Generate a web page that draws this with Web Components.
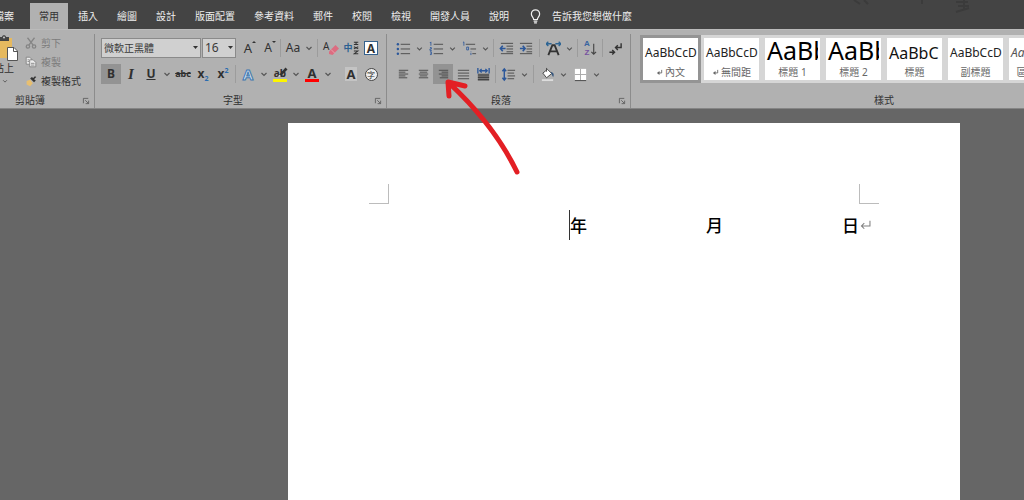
<!DOCTYPE html>
<html lang="zh-Hant">
<head>
<meta charset="utf-8">
<title>Word</title>
<style>
html, body { margin: 0; height: 100%; overflow: hidden; }
body { font: 10px/14px "Noto Sans", "Noto Sans CJK TC", sans-serif; background: #666; color: #303030; }
</style>
</head>
<body>
<word-app></word-app>
<script>
const define = (name, html, setup) => customElements.define(name, class extends HTMLElement {
  connectedCallback() {
    if (this.shadowRoot) return;
    const t = document.createElement('template');
    t.innerHTML = typeof html === 'function' ? html(this) : html;
    this.attachShadow({ mode: 'open' }).append(t.content.cloneNode(true));
    if (setup) setup(this);
  }
});

const lines = (rows, c = '#4a4a4a') => rows.map(([x1, x2, y]) => `<path d="M${x1} ${y}H${x2}" stroke="${c}" stroke-width="1"/>`).join('');
const BLUE = '#2b579a';
const icons = {
  chevron: '<path d="M5.500 7L8 9.500L10.500 7" stroke="#555" stroke-width="1.200"/>',
  launcher: '<path d="M4.500 11V4.500H11M7 7L11 11M11.500 7.500V11.500H7.500" stroke="#505050"/>',
  bulb: '<path d="M6 11.200C6 9 3.600 8.300 3.600 5.300A4.400 4.400 0 0 1 12.400 5.300C12.400 8.300 10 9 10 11.200ZM6 13H10M6.500 14.700H9.500" stroke="#f0f0f0" stroke-width="1.300"/>',
  cut: '<g stroke="#858585" stroke-width="1.500"><path d="M4 2L10.500 10.500M12 2L5.500 10.500"/><circle cx="4.500" cy="12" r="1.900"/><circle cx="11.500" cy="12" r="1.900"/></g>',
  copy: '<g fill="#eee" stroke="#808080"><path d="M2.500 2.500H6.500L8.500 4.500V10.500H2.500Z"/><path d="M6.500 5.500H10.500L13.500 8.500V13.500H6.500Z"/><path d="M8 9.500H12M8 11.500H12M4 5.500H6M4 7.500H6"/></g>',
  brush: '<path d="M3 8L7 6.500L10 10.500L7 14L3 12Z" fill="#e8bf70"/><path d="M7 5L11.500 9.500L13.500 7.500L11.500 6L14 3.500L12.500 2.500L10.500 4.500L9 3.500Z" fill="#333"/>',
  eraser: '<path d="M6 11.500L12.500 5L16 8.500L9.500 15L6 14Z" fill="#dc6c80"/><path d="M8 9.500L12 13.500" stroke="#e9a0ab"/>',
  brush2: '<path d="M7 11L13.500 3.500L15.500 5.500L9 12Z" fill="#333"/><path d="M7 11L6 13L9 12Z" fill="#eee"/>',
  bullets: `<g fill="${BLUE}"><circle cx="2" cy="3.500" r="1.300"/><circle cx="2" cy="8.500" r="1.300"/><circle cx="2" cy="13.500" r="1.300"/></g>` + lines([[5,15,3.5],[5,15,8.5],[5,15,13.5]]),
  numbers: `<path d="M1 2L2 1V5M1 7H2.500V8.500H1V10H3M1 11.500H2.500V14.500H1M1.500 13H2.500" stroke="${BLUE}" stroke-width=".9"/>` + lines([[5,15,3.5],[5,15,8.5],[5,15,13.5]]),
  multi: `<path d="M1 1.500L2 1V5M5 6.500H7V9.500H5V6.500M9.500 11V11.500M9.500 12.500V15" stroke="${BLUE}" stroke-width=".9"/>` + lines([[4,14,3.5],[9,15,8.5],[11,15,13.5]]),
  outdent: lines([[2,15,2.5],[8,15,5.5],[8,15,8.5],[8,15,11.5],[2,15,13.5]]) + `<path d="M7 8H1.500M4 5L1.500 8L4 11" stroke="${BLUE}" stroke-width="1.700"/>`,
  indent: lines([[1,14,2.5],[8,14,5.5],[8,14,8.5],[8,14,11.5],[1,14,13.5]]) + `<path d="M1 8H6.500M4 5L6.500 8L4 11" stroke="${BLUE}" stroke-width="1.700"/>`,
  scale: `<path d="M0 3H6M2.500 .8L0 3L2.500 5.200M10 3H16M13.500 .8L16 3L13.500 5.200" stroke="#2e6594" stroke-width="1.500"/><path d="M2.500 15L6.800 4.500H9.200L13.500 15M4.500 11H11.500" stroke="#333" stroke-width="2"/>`,
  down: '<path d="M12.500 3V14M10 11.500L12.500 14L15 11.500" stroke="#444" stroke-width="1.200"/>',
  marks: '<path d="M14 2.500V7H8M10.500 4.500L8 7L10.500 9.500M1.500 12H7M4.500 9.500L7 12L4.500 14.500" stroke="#333" stroke-width="1.500"/>',
  ruby: '<path d="M1 1.500H6M1 4H6M3.500 1.500V4M1 6.500L6 9M6 6.500L1 9M1 11.500H5.500L1.500 14.500H6" stroke="#333" stroke-width="1.200"/>',
  left: lines([[3,13,3.5],[3,10,5.5],[3,13,7.5],[3,10,9.5],[3,12,11.5]]),
  center: lines([[3,13,3.5],[4,12,5.5],[3,13,7.5],[4,12,9.5],[3,13,11.5]]),
  right: lines([[3,13,3.5],[6,13,5.5],[3,13,7.5],[6,13,9.5],[4,13,11.5]]),
  justify: lines([[2,14,3.5],[2,14,6.5],[2,14,9.5],[2,14,12.5]]),
  distribute: `<path d="M2 7H14V14.500H2Z" fill="#777"/><path d="M2 8.500H14M2 11H14M2 13.500H14" stroke="#444" stroke-width="1.200"/><path d="M2 1V7M14 1V7M4 4H12M6 2L4 4L6 6M10 2L12 4L10 6" stroke="${BLUE}" stroke-width="1.400"/>`,
  spacing: lines([[7,15,3.5],[7,14,6.5],[7,15,9.5],[7,14,12.5]]) + `<path d="M3.500 2V14M1.500 4.500L3.500 2L5.500 4.500M1.500 11.500L3.500 14L5.500 11.500" stroke="${BLUE}" stroke-width="1.500"/>`,
  bucket: '<path d="M3 6.500L8 2.500L12.500 7L7 11.500Z" fill="#fff" stroke="#444"/><path d="M7 5V1" stroke="#444"/><path d="M11.500 5C15 6 15 8 14 11L12 7Z" fill="#34557c"/><path d="M2 13H14V15H2Z" fill="#ddd"/>',
  borders: '<path d="M2 2H14V14H2Z" fill="#fff"/><path d="M8 2V14M2 8H14" stroke="#a8a8a8"/><path d="M2 14.500H14" stroke="#444"/>',
  enter: '<path d="M13.500 2V8.500H3M6.500 5L3 8.500L6.500 12" stroke="#808080" stroke-width="1.300"/>',
  mark: '<path d="M13 2V9H5" stroke="#666" stroke-width="2"/><path d="M8 4.500V13.500L2 9Z" fill="#666"/>'
};

define('word-icon', el => `<style>
:host { display: inline-flex; width: var(--icon, 16px); height: var(--icon, 16px); flex: none; }
svg { width: 100%; height: 100%; }
</style><svg viewBox="0 0 16 16" fill="none" aria-hidden="true">${icons[el.getAttribute('name')]}</svg>`);

define('ribbon-tab', el => `<style>
:host { display: block; flex: none; }
button { display: block; height: 26px; padding: 0 9px; border: 0; background: none; color: #eee; font: inherit; white-space: nowrap; }
:host([selected]) button { background: #b1b1b1; color: #333; }
:host([wide]) button { padding-right: 15px; }
</style><button type="button" role="tab" aria-selected="${el.hasAttribute('selected')}"><slot></slot></button>`);

define('tell-me', `<style>
:host { display: block; margin-left: 9px; --icon: 15px; }
button { display: flex; align-items: center; gap: 9px; height: 26px; padding: 0; border: 0; background: none; color: #eee; font: inherit; }
</style><button type="button"><word-icon name="bulb"></word-icon><span>告訴我您想做什麼</span></button>`);

define('ribbon-tabs', `<style>
:host { display: block; background: #444; position: relative; overflow: hidden; }
nav { display: flex; gap: 1px; padding-top: 3px; margin-left: -15px; }
svg { position: absolute; right: 30px; top: 0; }
</style>
<svg width="150" height="14" fill="none" stroke="#3b3b3b" stroke-width="2" aria-hidden="true"><path d="M10 0L16 4M20 0L24 4M78 0V4M112 2H124M114 6H125M120 0V11M112 12L125 8"/></svg>
<nav role="tablist">
<ribbon-tab wide>檔案</ribbon-tab><ribbon-tab selected>常用</ribbon-tab><ribbon-tab>插入</ribbon-tab><ribbon-tab>繪圖</ribbon-tab><ribbon-tab>設計</ribbon-tab><ribbon-tab>版面配置</ribbon-tab><ribbon-tab>參考資料</ribbon-tab><ribbon-tab>郵件</ribbon-tab><ribbon-tab>校閱</ribbon-tab><ribbon-tab>檢視</ribbon-tab><ribbon-tab>開發人員</ribbon-tab><ribbon-tab>說明</ribbon-tab><tell-me></tell-me>
</nav>`);

define('ribbon-group', el => `<style>
:host { display: flex; flex-direction: column; flex: none; box-sizing: border-box; border-right: 1px solid #8c8c8c; height: 74px; }
.body { flex: 1; }
footer { position: relative; text-align: center; height: 16px; line-height: 16px; }
:host([launcher]) footer { padding-right: 15px; }
button { position: absolute; right: 2px; top: 3px; padding: 0; border: 0; background: none; display: flex; --icon: 12px; }
</style><div class="body"><slot></slot></div>
<footer>${el.getAttribute('label')}${el.hasAttribute('launcher') ? `<button type="button" aria-label="${el.getAttribute('label')}設定"><word-icon name="launcher"></word-icon></button>` : ''}</footer>`);

define('tool-button', el => `<style>
:host { display: flex; flex: none; }
button { display: flex; align-items: center; justify-content: center; padding: 0; border: 0; background: none; height: 20px; color: #303030; font: inherit; position: relative; }
.main { width: 20px; }
.more { width: 12px; }
:host([pressed]) .main { background: #939393; }
</style><button class="main" type="button" aria-label="${el.getAttribute('label')}" aria-pressed="${el.hasAttribute('pressed')}"><slot></slot></button>${el.hasAttribute('menu') ? `<button class="more" type="button" aria-label="${el.getAttribute('label')}選項"><word-icon name="chevron"></word-icon></button>` : ''}`);

define('tool-separator', `<style>:host { display: block; flex: none; width: 1px; height: 18px; margin: 0 2px; background: #9c9c9c; } :host([wide]) { margin: 0 3px; }</style>`);

define('combo-box', el => `<style>
:host { display: block; position: relative; height: 20px; --icon: 12px; }
select { appearance: none; display: block; box-sizing: border-box; width: 100%; height: 20px; padding: 0 2px; border: 1px solid #8a8a8a; border-radius: 0; background: #d0d0d0; color: #3a3a3a; font: inherit; }
:host([large]) select { font-size: 12px; }
svg { position: absolute; right: 3px; top: 8px; pointer-events: none; }
</style><select aria-label="${el.getAttribute('label')}"><option>${el.getAttribute('value')}</option></select><svg width="5" height="4" aria-hidden="true"><path d="M0 0H5L2.500 3Z" fill="#333"/></svg>`);

define('clipboard-tools', `<style>
:host { display: flex; width: 94px; padding-left: 19px; height: 56px; }
button { padding: 0; border: 0; background: none; font: inherit; color: #303030; display: flex; align-items: center; white-space: nowrap; }
.paste { flex-direction: column; align-items: flex-start; width: 23px; padding-top: 1px; }
.paste span { margin-left: -6px; }
.paste word-icon { margin: 0 0 0 -1px; --icon: 12px; }
.list { display: flex; flex-direction: column; margin-left: 1px; }
.list button { gap: 3px; height: 19px; }
.list button:disabled { color: #7c7c7c; }
.list word-icon { --icon: 14px; }
</style>
<button class="paste" type="button"><svg width="19" height="26" viewBox="0 0 19 26" fill="none" aria-hidden="true"><path d="M0 3H12V23H0Z" fill="#e6b95f"/><path d="M0 2H2C2 -.5 6 -.5 6 2H9V6H0Z" fill="#444"/><circle cx="4" cy="2.500" r="1" fill="#ccc"/><path d="M7.500 12.500H14L17.500 16V25.500H7.500Z" fill="#fff" stroke="#555"/><path d="M13.500 12.500V16.500H17.500" stroke="#555"/></svg><span>貼上</span><word-icon name="chevron"></word-icon></button>
<div class="list">
<button type="button" disabled><word-icon name="cut"></word-icon>剪下</button>
<button type="button" disabled><word-icon name="copy"></word-icon>複製</button>
<button type="button"><word-icon name="brush"></word-icon>複製格式</button>
</div>`);

define('font-tools', `<style>
:host { display: block; padding: 4px 0 0 6px; width: 285px; }
.row { display: flex; align-items: center; height: 20px; }
.row + .row { margin-top: 6px; }
.family { width: 100px; margin-right: 1px; }
.size { width: 34px; margin-right: 2px; }
b, i, u, s, span { font-family: "Noto Sans", sans-serif; line-height: 16px; }
.big { font-size: 13px; }
.mid { font-size: 12px; }
.tiny { font-size: 9px; }
i { font-family: "Liberation Serif", serif; font-size: 15px; font-weight: bold; }
sub, sup { font-size: 7px; line-height: 0; color: #2b6cb0; }
.over { position: absolute; inset: 0 auto auto 2px; }
.bar { border-bottom: 3px solid red; line-height: 12px; width: 14px; text-align: center; }
.yellow { border-color: #fdf500; }
.outline { color: #d0dfee; -webkit-text-stroke: 1px #3f78b0; font-size: 15px; }
.box { box-sizing: border-box; width: 14px; height: 14px; line-height: 13px; background: #fff; border: 1px solid #34618d; text-align: center; font-size: 12px; }
.shade { background: #c4c4c4; width: 12px; line-height: 14px; text-align: center; }
.last { margin-left: auto; }
.actions { display: flex; margin-left: auto; margin-right: 5px; }
.ring { box-sizing: border-box; width: 13px; height: 13px; border: 1px solid #444; border-radius: 50%; background: #eee; font: 8px/11px "Noto Sans CJK TC", sans-serif; text-align: center; }
.zh { color: #2c5f91; font-family: "Noto Sans CJK TC", sans-serif; font-size: 9px; font-weight: bold; }
.mark { position: absolute; right: 1px; top: 0; }
.ruby { --icon: 14px; margin-right: -8px; }
</style>
<div class="row">
<combo-box class="family" label="字型" value="微軟正黑體"></combo-box>
<combo-box class="size" large label="字型大小" value="16"></combo-box>
<tool-button label="放大字型"><span class="big">A</span><svg class="mark" width="6" height="8" aria-hidden="true"><path d="M1 5L3 3L5 5Z" fill="#333"/></svg></tool-button>
<tool-button label="縮小字型"><span class="mid">A</span><svg class="mark" width="6" height="8" aria-hidden="true"><path d="M1 3L3 5L5 3Z" fill="#333"/></svg></tool-button>
<tool-separator></tool-separator>
<tool-button label="大小寫轉換" menu><span class="mid">Aa</span></tool-button>
<tool-separator></tool-separator>
<div class="actions">
<tool-button label="清除格式"><word-icon name="eraser"></word-icon><span class="over">A</span></tool-button>
<tool-button label="注音標示"><span class="zh">中</span><word-icon class="ruby" name="ruby"></word-icon></tool-button>
<tool-button label="字元框線"><b class="box">A</b></tool-button>
</div>
</div>
<div class="row">
<tool-button label="粗體" pressed><b class="mid">B</b></tool-button>
<tool-button label="斜體"><i>I</i></tool-button>
<tool-button label="底線" menu><u class="mid"><b>U</b></u></tool-button>
<tool-button label="刪除線"><s class="tiny"><b>abc</b></s></tool-button>
<tool-button label="下標"><b class="mid">x<sub>2</sub></b></tool-button>
<tool-button label="上標"><b class="mid">x<sup>2</sup></b></tool-button>
<tool-separator></tool-separator>
<tool-button label="文字效果" menu><b class="outline">A</b></tool-button>
<tool-button label="醒目提示" menu><b class="bar yellow">ab</b><word-icon name="brush2" class="over"></word-icon></tool-button>
<tool-button label="字型色彩" menu><b class="bar big">A</b></tool-button>
<div class="actions">
<tool-button label="字元網底"><b class="shade big">A</b></tool-button>
<tool-button label="圍繞字元"><span class="ring">字</span></tool-button>
</div>
</div>`);

define('paragraph-tools', `<style>
:host { display: block; padding: 4px 0 0 6px; width: 237px; --icon: 15px; }
.row { display: flex; align-items: center; height: 20px; }
.row + .row { margin-top: 6px; }
.az { display: flex; flex-direction: column; margin-right: 6px; font: bold 8px/9px "Liberation Sans", sans-serif; color: #3864a0; }
.az b + b { color: #7651a0; }
.over { position: absolute; left: 2px; }
tool-button[menu] + tool-button[menu] { margin-left: 1px; }
</style>
<div class="row">
<tool-button label="項目符號" menu><word-icon name="bullets"></word-icon></tool-button>
<tool-button label="編號" menu><word-icon name="numbers"></word-icon></tool-button>
<tool-button label="多層次清單" menu><word-icon name="multi"></word-icon></tool-button>
<tool-separator></tool-separator>
<tool-button label="減少縮排"><word-icon name="outdent"></word-icon></tool-button>
<tool-button label="增加縮排"><word-icon name="indent"></word-icon></tool-button>
<tool-separator wide></tool-separator>
<tool-button label="亞洲方式配置" menu><word-icon name="scale"></word-icon></tool-button>
<tool-separator></tool-separator>
<tool-button label="排序"><span class="az"><b>A</b><b>Z</b></span><word-icon name="down" class="over"></word-icon></tool-button>
<tool-separator></tool-separator>
<tool-button label="顯示標記"><word-icon name="marks"></word-icon></tool-button>
</div>
<div class="row">
<tool-button label="靠左對齊"><word-icon name="left"></word-icon></tool-button>
<tool-button label="置中"><word-icon name="center"></word-icon></tool-button>
<tool-button label="靠右對齊" pressed><word-icon name="right"></word-icon></tool-button>
<tool-button label="左右對齊"><word-icon name="justify"></word-icon></tool-button>
<tool-button label="分散對齊"><word-icon name="distribute"></word-icon></tool-button>
<tool-separator></tool-separator>
<tool-button label="行距" menu><word-icon name="spacing"></word-icon></tool-button>
<tool-separator wide></tool-separator>
<tool-button label="網底" menu><word-icon name="bucket"></word-icon></tool-button>
<tool-button label="框線" menu><word-icon name="borders"></word-icon></tool-button>
</div>`);

define('style-tile', el => `<style>
:host { display: block; flex: none; width: 61px; }
button { display: flex; flex-direction: column; box-sizing: border-box; width: 61px; height: 48px; padding: 0; border: 3px solid #d6d6d6; background: #fff; font: inherit; color: #666; overflow: hidden; }
:host([selected]) button { border-color: #949494; }
.sample { width: 100%; box-sizing: border-box; padding-left: 2px; height: 27px; line-height: 30px; font-size: 12px; color: #222; text-align: left; white-space: nowrap; overflow: hidden; }
:host([size="large"]) .sample { width: 53px; font-size: 25px; line-height: 24px; color: #000; }
:host([size="medium"]) .sample { font-size: 16px; line-height: 30px; color: #111; }
:host([italic]) .sample { font-style: italic; color: #555; }
.name { width: 100%; height: 14px; display: flex; justify-content: center; align-items: center; gap: 2px; --icon: 7px; white-space: nowrap; }
</style><button type="button"><span class="sample">${el.getAttribute('sample')}</span><span class="name">${el.hasAttribute('mark') ? '<word-icon name="mark"></word-icon>' : ''}<slot></slot></span></button>`);

define('style-gallery', `<style>
:host { display: block; width: 506px; box-sizing: border-box; padding: 1px 0 0 9px; }
div { display: flex; background: #d6d6d6; }
</style><div>
<style-tile sample="AaBbCcD" mark selected>內文</style-tile>
<style-tile sample="AaBbCcD" mark>無間距</style-tile>
<style-tile sample="AaBb" size="large">標題 1</style-tile>
<style-tile sample="AaBb" size="large">標題 2</style-tile>
<style-tile sample="AaBbC" size="medium">標題</style-tile>
<style-tile sample="AaBbCcD">副標題</style-tile>
<style-tile sample="AaBbCcD" italic>區別強調</style-tile>
</div>`);

define('ribbon-bar', `<style>
:host { display: flex; background: #b1b1b1; padding: 4px 0 1px; border-top: 1px solid #bbb; border-bottom: 1px solid #858585; box-sizing: border-box; height: 80px; overflow: hidden; }
ribbon-group:first-of-type { margin-left: -19px; }
</style>
<ribbon-group label="剪貼簿" launcher><clipboard-tools></clipboard-tools></ribbon-group>
<ribbon-group label="字型" launcher><font-tools></font-tools></ribbon-group>
<ribbon-group label="段落" launcher><paragraph-tools></paragraph-tools></ribbon-group>
<ribbon-group label="樣式"><style-gallery></style-gallery></ribbon-group>`);

define('document-page', `<style>
:host { display: block; flex: 1; background: #fff; margin: 14px 64px 0 288px; padding: 61px 81px 0; color: #000; }
.corners { display: flex; justify-content: space-between; }
.corners i { width: 19px; height: 19px; border: 0 solid #bcbcbc; border-bottom-width: 1px; }
.corners i:first-child { border-right-width: 1px; }
.corners i:last-child { border-left-width: 1px; }
p { display: flex; align-items: center; justify-content: flex-end; margin: 6px 7px 0 0; height: 30px; font: 500 17px/30px "Noto Sans CJK TC", sans-serif; --icon: 13px; }
span + span { margin-left: 119px; }
.caret { width: 1px; height: 30px; background: #333; }
</style><div class="corners"><i></i><i></i></div>
<p><b class="caret"></b><span>年</span><span>月</span><span>日</span><word-icon name="enter"></word-icon></p>`);

define('pointer-arrow', `<style>
:host { display: block; position: absolute; left: 440px; top: 76px; pointer-events: none; }
svg { display: block; }
</style><svg width="84" height="104" fill="none" stroke="#e31f24" stroke-width="5" stroke-linecap="round" stroke-linejoin="round" aria-hidden="true"><path d="M77 96C61 63 36 32 9 7M9 20L8 6L25 10"/></svg>`);

define('word-app', `<style>:host { display: flex; flex-direction: column; min-height: 100vh; position: relative; }</style>
<ribbon-tabs></ribbon-tabs><ribbon-bar></ribbon-bar><document-page></document-page><pointer-arrow></pointer-arrow>`);
</script>
</body>
</html>
